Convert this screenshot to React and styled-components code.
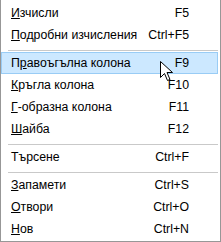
import React from "react";
import styled, { createGlobalStyle } from "styled-components";

const Global = createGlobalStyle`
  html, body { margin: 0; padding: 0; background: #ffffff; }
  body { font-family: "Segoe UI", "Liberation Sans", Arial, sans-serif; }
`;

const Menu = styled.div`
  position: relative;
  box-sizing: border-box;
  width: 221px;
  height: 242px;
  background: #ffffff;
  border: 1px solid #979797;
  border-top: none;
  padding: 2px 2px 1px 0;
  display: flex;
  flex-direction: column;
  font-family: "Liberation Sans", Arial, sans-serif;
  font-size: 12.3px;
  color: #000000;
`;

const Item = styled.div`
  box-sizing: border-box;
  height: 22px;
  display: flex;
  align-items: center;
  justify-content: space-between;
  padding: 0 28px 0 9px;
  border: 1px solid ${(p) => (p.$active ? "#99CCF5" : "transparent")};
  background: ${(p) => (p.$active ? "#CCE8FF" : "transparent")};
  white-space: nowrap;
`;

const Label = styled.span`
  line-height: 20px;
`;

const Key = styled.span`
  text-decoration: underline;
`;

const Shortcut = styled.span`
  line-height: 20px;
  text-align: right;
`;

const Separator = styled.div`
  height: 1px;
  margin: 4px 0 1px 7px;
  background: #c9c9c9;
`;

const Cursor = styled.svg`
  position: absolute;
  left: 159px;
  top: 61px;
  pointer-events: none;
`;

function Entry({ pre = "", k, post = "", shortcut, active }) {
  return (
    <Item $active={active}>
      <Label>
        {pre}
        {k ? <Key>{k}</Key> : null}
        {post}
      </Label>
      <Shortcut>{shortcut}</Shortcut>
    </Item>
  );
}

export default function App() {
  return (
    <>
      <Global />
      <Menu>
        <Entry k="И" post="зчисли" shortcut="F5" />
        <Entry k="П" post="одробни изчисления" shortcut="Ctrl+F5" />
        <Separator />
        <Entry pre="П" k="р" post="авоъгълна колона" shortcut="F9" active />
        <Entry k="К" post="ръгла колона" shortcut="F10" />
        <Entry k="Г" post="-образна колона" shortcut="F11" />
        <Entry k="Ш" post="айба" shortcut="F12" />
        <Separator />
        <Entry post="Търсене" shortcut="Ctrl+F" />
        <Separator />
        <Entry k="З" post="апамети" shortcut="Ctrl+S" />
        <Entry k="О" post="твори" shortcut="Ctrl+O" />
        <Entry k="Н" post="ов" shortcut="Ctrl+N" />
        <Cursor width="13" height="21" viewBox="0 0 13 21">
          <path
            d="M0.5 0.5 L0.5 16.5 L4.5 12.5 L7.5 19.5 L10 18.5 L7 11.5 L12.5 11.5 Z"
            fill="#ffffff"
            stroke="#000000"
            strokeWidth="1"
            strokeLinejoin="miter"
          />
        </Cursor>
      </Menu>
    </>
  );
}
